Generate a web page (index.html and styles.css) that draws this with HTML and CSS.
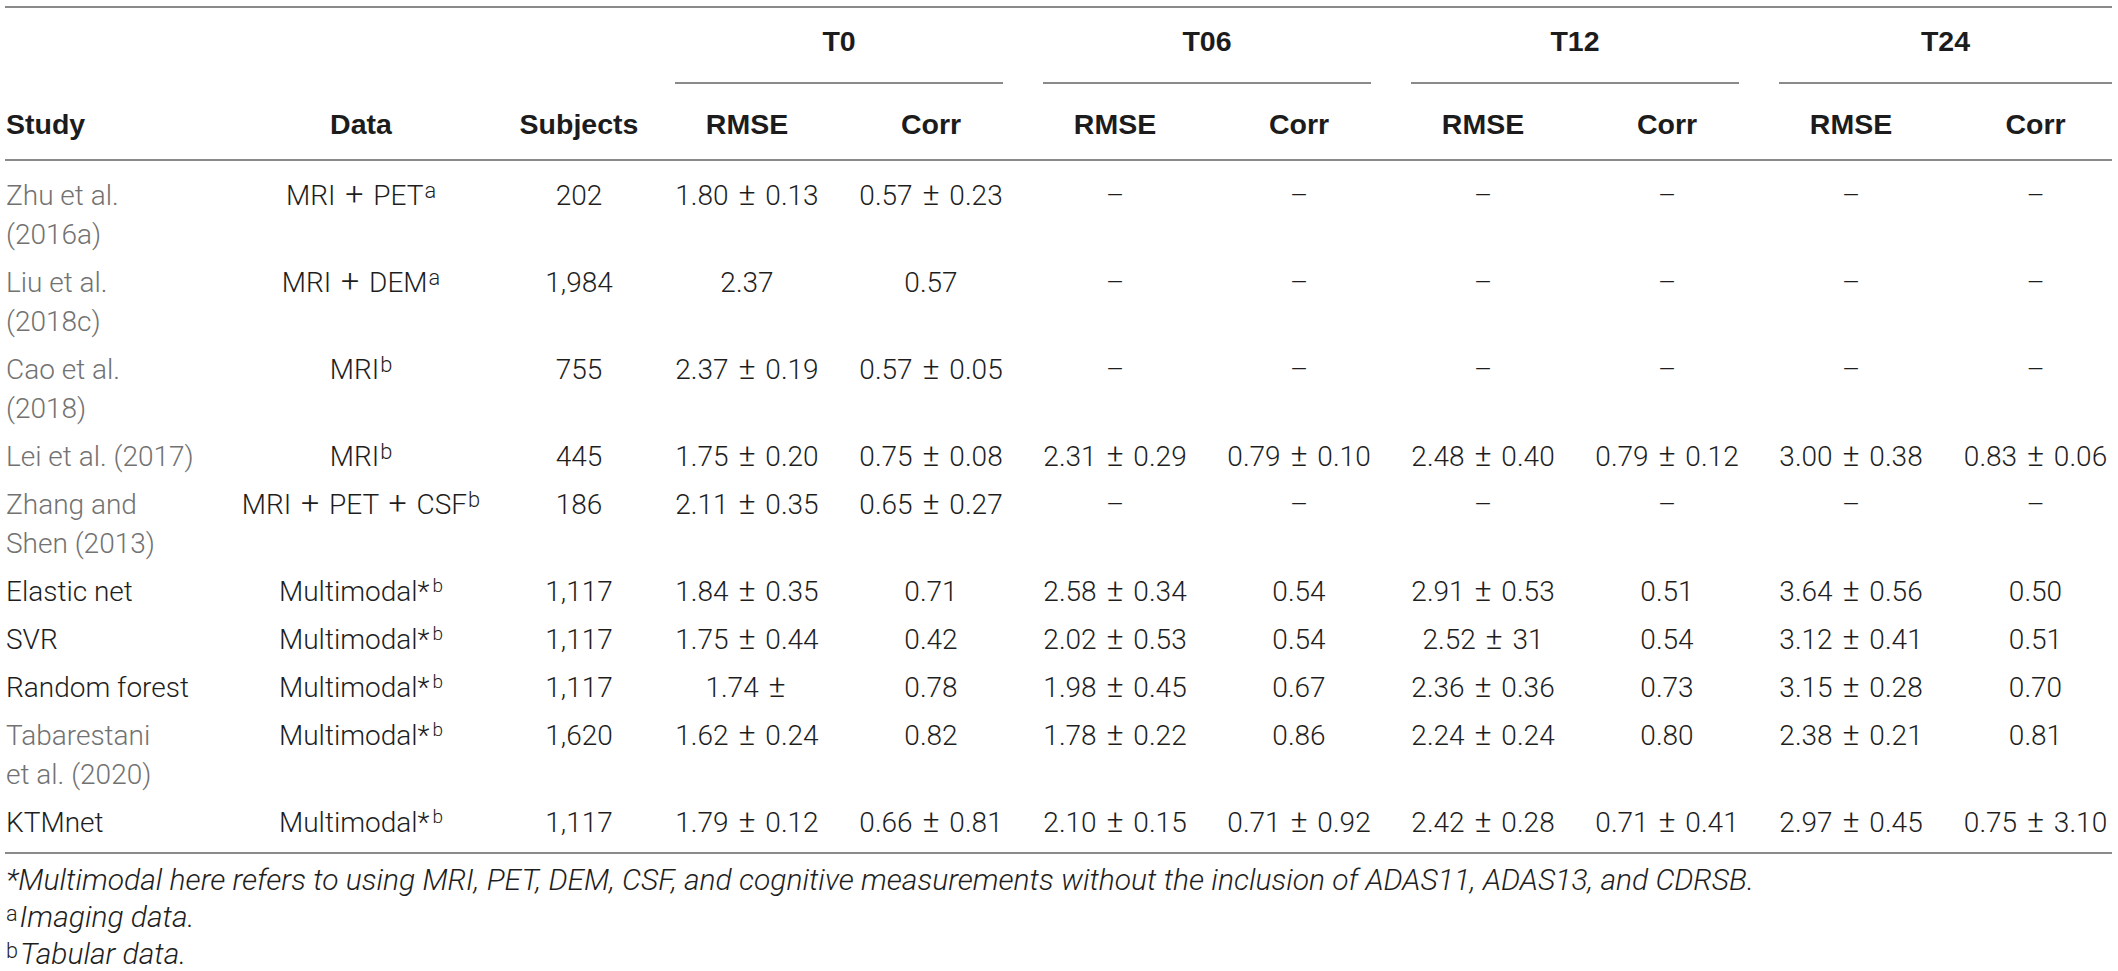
FILE: index.html
```html
<!DOCTYPE html>
<html lang="en">
<head>
    <meta charset="UTF-8">
    <meta name="viewport" content="width=device-width, initial-scale=1.0">
    <title>Regression results</title>
    <link rel="stylesheet" href="styles.css">
</head>
<body>

<div class="table-wrap">
    <table class="results">
        <colgroup>
            <col class="col-study">
            <col class="col-data">
            <col class="col-subjects">
            <col class="col-num"><col class="col-num">
            <col class="col-num"><col class="col-num">
            <col class="col-num"><col class="col-num">
            <col class="col-num"><col class="col-last">
        </colgroup>
        <thead>
            <tr class="group-row">
                <th rowspan="2" class="study">Study</th>
                <th rowspan="2">Data</th>
                <th rowspan="2">Subjects</th>
                <th colspan="2" class="group"><div class="group-label">T0</div></th>
                <th colspan="2" class="group"><div class="group-label">T06</div></th>
                <th colspan="2" class="group"><div class="group-label">T12</div></th>
                <th colspan="2" class="group last"><div class="group-label">T24</div></th>
            </tr>
            <tr class="metric-row">
                <th>RMSE</th><th>Corr</th>
                <th>RMSE</th><th>Corr</th>
                <th>RMSE</th><th>Corr</th>
                <th>RMSE</th><th class="last">Corr</th>
            </tr>
        </thead>
        <tbody>
            <tr>
                <td class="study cite">Zhu et&nbsp;al. (2016a)</td>
                <td>MRI <span class="op">+</span> PET<sup>a</sup></td>
                <td>202</td>
                <td>1.80 <span class="op">±</span> 0.13</td><td>0.57 <span class="op">±</span> 0.23</td>
                <td>–</td><td>–</td>
                <td>–</td><td>–</td>
                <td>–</td><td class="last">–</td>
            </tr>
            <tr>
                <td class="study cite">Liu et&nbsp;al. (2018c)</td>
                <td>MRI <span class="op">+</span> DEM<sup>a</sup></td>
                <td>1,984</td>
                <td>2.37</td><td>0.57</td>
                <td>–</td><td>–</td>
                <td>–</td><td>–</td>
                <td>–</td><td class="last">–</td>
            </tr>
            <tr>
                <td class="study cite">Cao et&nbsp;al. (2018)</td>
                <td>MRI<sup>b</sup></td>
                <td>755</td>
                <td>2.37 <span class="op">±</span> 0.19</td><td>0.57 <span class="op">±</span> 0.05</td>
                <td>–</td><td>–</td>
                <td>–</td><td>–</td>
                <td>–</td><td class="last">–</td>
            </tr>
            <tr>
                <td class="study cite">Lei et&nbsp;al. (2017)</td>
                <td>MRI<sup>b</sup></td>
                <td>445</td>
                <td>1.75 <span class="op">±</span> 0.20</td><td>0.75 <span class="op">±</span> 0.08</td>
                <td>2.31 <span class="op">±</span> 0.29</td><td>0.79 <span class="op">±</span> 0.10</td>
                <td>2.48 <span class="op">±</span> 0.40</td><td>0.79 <span class="op">±</span> 0.12</td>
                <td>3.00 <span class="op">±</span> 0.38</td><td class="last">0.83 <span class="op">±</span> 0.06</td>
            </tr>
            <tr>
                <td class="study cite">Zhang and Shen&nbsp;(2013)</td>
                <td>MRI <span class="op">+</span> PET <span class="op">+</span> CSF<sup>b</sup></td>
                <td>186</td>
                <td>2.11 <span class="op">±</span> 0.35</td><td>0.65 <span class="op">±</span> 0.27</td>
                <td>–</td><td>–</td>
                <td>–</td><td>–</td>
                <td>–</td><td class="last">–</td>
            </tr>
            <tr>
                <td class="study">Elastic net</td>
                <td>Multimodal*<sup class="tab">b</sup></td>
                <td>1,117</td>
                <td>1.84 <span class="op">±</span> 0.35</td><td>0.71</td>
                <td>2.58 <span class="op">±</span> 0.34</td><td>0.54</td>
                <td>2.91 <span class="op">±</span> 0.53</td><td>0.51</td>
                <td>3.64 <span class="op">±</span> 0.56</td><td class="last">0.50</td>
            </tr>
            <tr>
                <td class="study">SVR</td>
                <td>Multimodal*<sup class="tab">b</sup></td>
                <td>1,117</td>
                <td>1.75 <span class="op">±</span> 0.44</td><td>0.42</td>
                <td>2.02 <span class="op">±</span> 0.53</td><td>0.54</td>
                <td>2.52 <span class="op">±</span> 31</td><td>0.54</td>
                <td>3.12 <span class="op">±</span> 0.41</td><td class="last">0.51</td>
            </tr>
            <tr>
                <td class="study">Random forest</td>
                <td>Multimodal*<sup class="tab">b</sup></td>
                <td>1,117</td>
                <td>1.74 <span class="op">±</span></td><td>0.78</td>
                <td>1.98 <span class="op">±</span> 0.45</td><td>0.67</td>
                <td>2.36 <span class="op">±</span> 0.36</td><td>0.73</td>
                <td>3.15 <span class="op">±</span> 0.28</td><td class="last">0.70</td>
            </tr>
            <tr>
                <td class="study cite">Tabarestani et&nbsp;al. (2020)</td>
                <td>Multimodal*<sup class="tab">b</sup></td>
                <td>1,620</td>
                <td>1.62 <span class="op">±</span> 0.24</td><td>0.82</td>
                <td>1.78 <span class="op">±</span> 0.22</td><td>0.86</td>
                <td>2.24 <span class="op">±</span> 0.24</td><td>0.80</td>
                <td>2.38 <span class="op">±</span> 0.21</td><td class="last">0.81</td>
            </tr>
            <tr>
                <td class="study">KTMnet</td>
                <td>Multimodal*<sup class="tab">b</sup></td>
                <td>1,117</td>
                <td>1.79 <span class="op">±</span> 0.12</td><td>0.66 <span class="op">±</span> 0.81</td>
                <td>2.10 <span class="op">±</span> 0.15</td><td>0.71 <span class="op">±</span> 0.92</td>
                <td>2.42 <span class="op">±</span> 0.28</td><td>0.71 <span class="op">±</span> 0.41</td>
                <td>2.97 <span class="op">±</span> 0.45</td><td class="last">0.75 <span class="op">±</span> 3.10</td>
            </tr>
        </tbody>
    </table>

    <div class="notes">
        <p><em>*Multimodal here refers to using MRI, PET, DEM, CSF, and cognitive measurements without the inclusion of ADAS11, ADAS13, and CDRSB.</em></p>
        <p><sup>a</sup><em>Imaging data.</em></p>
        <p><sup>b</sup><em>Tabular data.</em></p>
    </div>
</div>

</body>
</html>
```

FILE: styles.css
```css
body {
    margin: 0;
    background-color: white;
    font-family: "Liberation Sans", Arial, sans-serif;
    color: #2b2b2b;
}
.table-wrap {
    padding: 6px 6px 0 5px;
}
.results {
    width: 2107px;
    table-layout: fixed;
    border-collapse: collapse;
    border-top: 2px solid #8a8a8a;
    border-bottom: 2px solid #8a8a8a;
}
.col-study { width: 214px; }
.col-data { width: 284px; }
.col-subjects { width: 152px; }
.col-num { width: 184px; }
.col-last { width: 169px; }

th {
    font-size: 28.5px;
    font-weight: bold;
    line-height: 34px;
    color: #1c1c1c;
    text-align: center;
    white-space: nowrap;
}
thead th[rowspan] {
    vertical-align: bottom;
    padding: 0 8px 18px 8px;
    border-bottom: 2px solid #8a8a8a;
}
thead th.study {
    text-align: left;
    padding-left: 1px;
}
.group-row .group {
    padding: 16px 0 0 0;
}
.group-label {
    margin: 0 20px;
    padding-bottom: 24px;
    border-bottom: 2px solid #8a8a8a;
}
.group.last .group-label {
    margin-right: 0;
}
.metric-row th {
    padding: 23px 8px 18px 8px;
    border-bottom: 2px solid #8a8a8a;
}
.metric-row th.last {
    padding-left: 16px;
    padding-right: 0;
}

td {
    font-family: Roboto, "Liberation Sans", sans-serif;
    font-weight: 300;
    font-size: 28px;
    line-height: 39px;
    padding: 4.5px 8px;
    text-align: center;
    vertical-align: top;
    color: #1e1e1e;
}
td.study {
    text-align: left;
    padding-left: 1px;
    padding-right: 13px;
}
td.cite {
    color: #727272;
}
td.last {
    padding-left: 16px;
    padding-right: 0;
}
tbody tr:first-child td {
    padding-top: 14.5px;
}
tbody tr:last-child td {
    padding-bottom: 10.5px;
}
.op {
    font-size: 1.15em;
    line-height: 1;
    margin: 0 3px;
}
sup {
    font-size: 0.78em;
    line-height: 0;
    vertical-align: 0.3em;
    margin-left: 1px;
}
sup.tab {
    font-size: 0.68em;
    vertical-align: 0.45em;
    margin-left: 3px;
}

.notes {
    margin-top: 7px;
    font-family: Roboto, "Liberation Sans", sans-serif;
    font-weight: 300;
    font-size: 30px;
    line-height: 37px;
    color: #1e1e1e;
}
.notes p {
    margin: 0;
    padding-left: 1px;
}
.notes sup {
    font-size: 0.72em;
    margin-left: 0;
    margin-right: 2px;
}
```
